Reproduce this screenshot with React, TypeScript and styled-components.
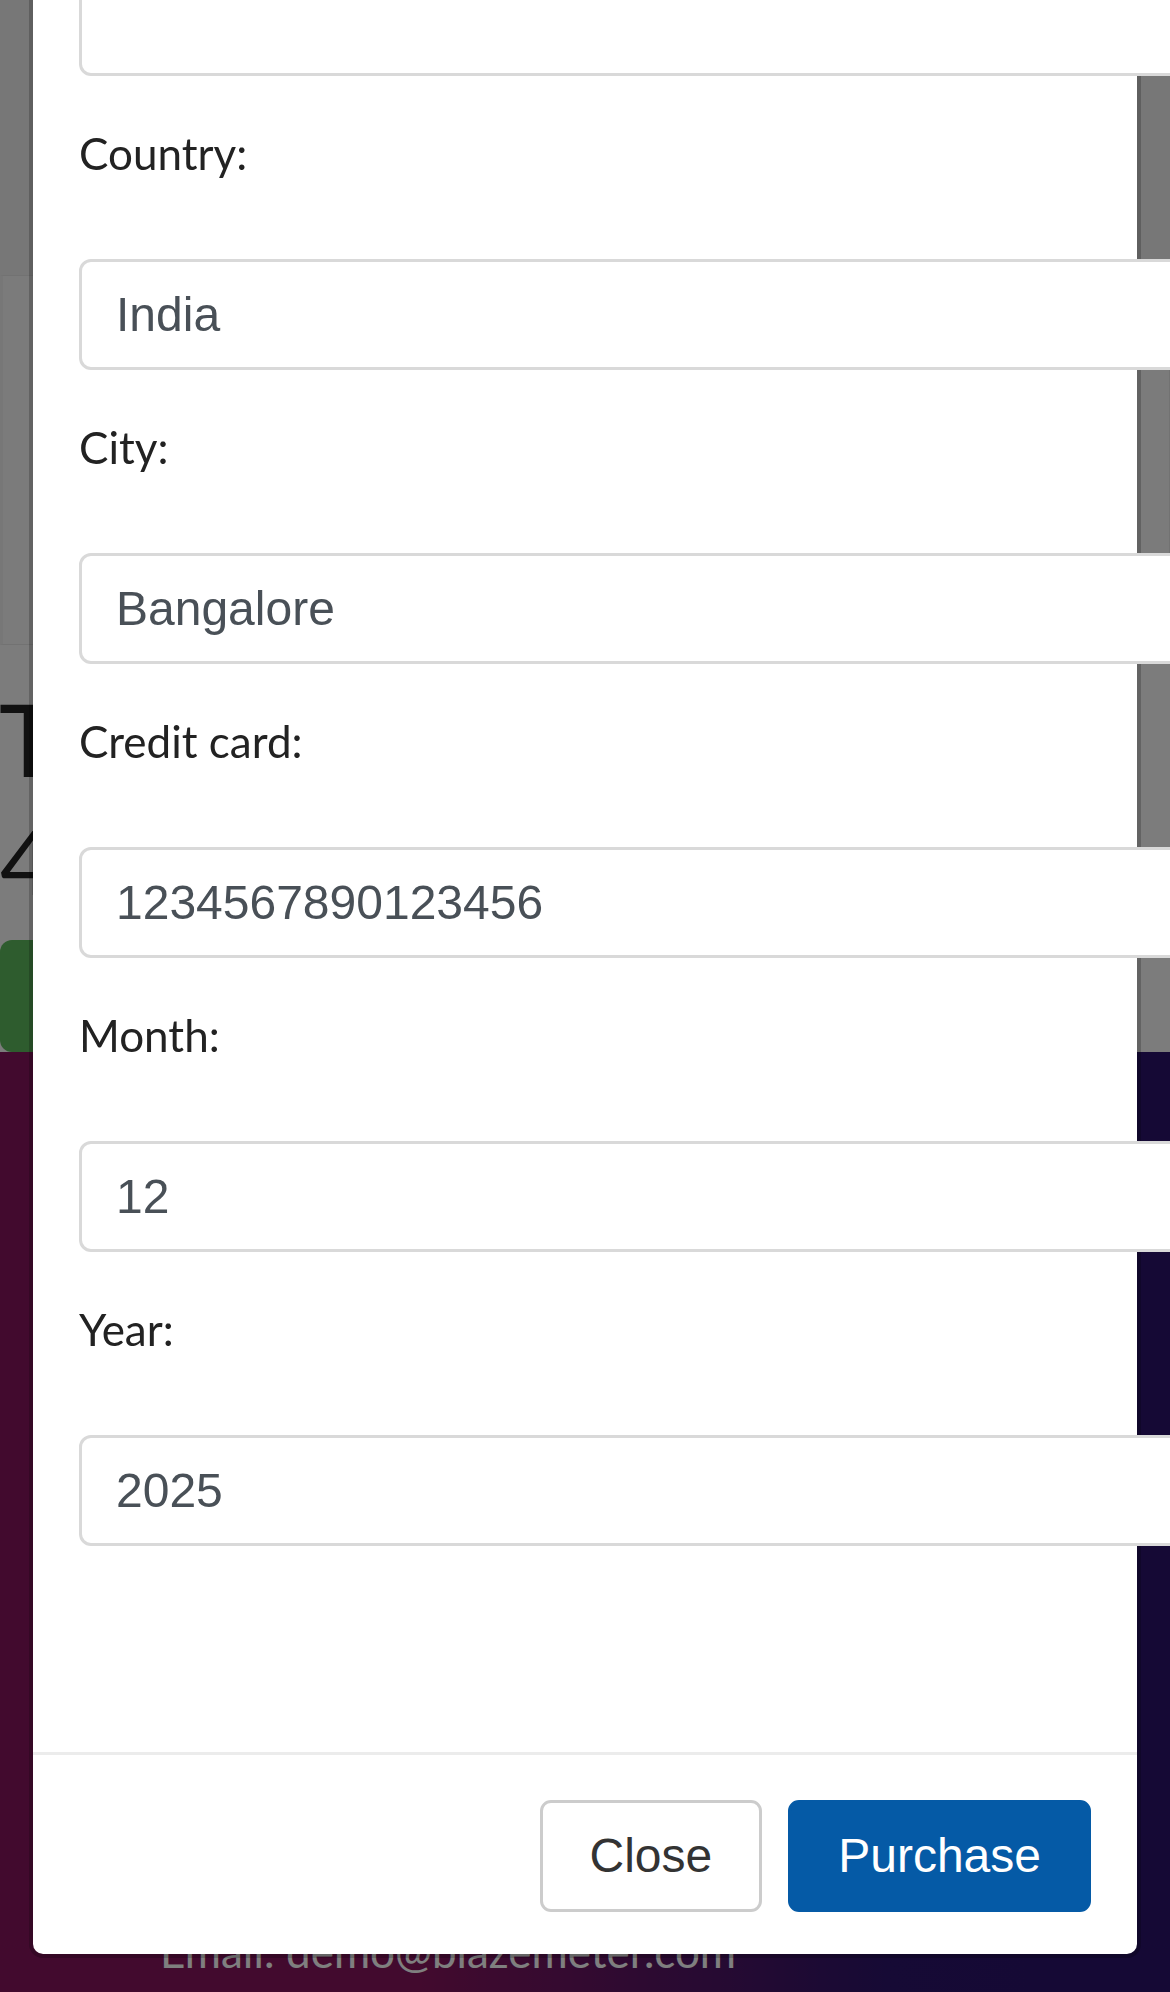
import React from "react";
import styled, { createGlobalStyle } from "styled-components";

const GlobalStyle = createGlobalStyle`
  html, body {
    margin: 0;
    padding: 0;
  }
  body {
    overflow: hidden;
    font-family: Lato, "Open Sans", sans-serif;
  }
  *, *::before, *::after {
    box-sizing: border-box;
  }
`;

/* ---------- underlying cart page ---------- */

const Page = styled.div`
  min-height: 100vh;
  display: flex;
  flex-direction: column;
  background: #f8f8f8;
`;

const TopBand = styled.div`
  height: 275px;
  background: #eeeeee;
`;

const Main = styled.main`
  display: flex;
  flex-direction: column;
  align-items: flex-start;
`;

const TableCard = styled.section`
  align-self: stretch;
  height: 370px;
  background: #f6f6f6;
  border: 1px solid #e4e4e4;
  border-left: 3px solid #eeeeee;
`;

const TotalHeading = styled.h2`
  margin: 43px 0 0 -1px;
  font: 400 100px/100px Lato, sans-serif;
  color: #222222;
`;

const TotalPrice = styled.h3`
  margin: 27px 0 0;
  font: 400 90px/90px Lato, sans-serif;
  color: #222222;
`;

const PlaceOrderButton = styled.button`
  margin-top: 35px;
  height: 112px;
  padding: 0 48px;
  border: none;
  border-radius: 12px;
  background: #5cb85c;
  color: #ffffff;
  font: 400 44px Lato, sans-serif;
`;

const Footer = styled.footer`
  flex: 1;
  display: flex;
  flex-direction: column;
  justify-content: flex-end;
  padding: 0 0 8px 160px;
  background: linear-gradient(
    90deg,
    #84145c 0%,
    #84145c 36%,
    #2c146a 76%,
    #2a126a 100%
  );
`;

const FooterTitle = styled.h4`
  margin: 0 0 30px;
  font: 700 55px/66px Lato, sans-serif;
  color: #ffffff;
`;

const FooterLine = styled.p`
  margin: 0;
  font: 400 44px/66px Lato, sans-serif;
  color: #ffffff;
`;

/* ---------- modal ---------- */

const Backdrop = styled.div`
  position: fixed;
  inset: 0;
  background: rgba(0, 0, 0, 0.5);
  overflow: hidden;
`;

const Dialog = styled.div`
  position: absolute;
  left: 29px;
  right: 29px;
  bottom: 34px;
  display: flex;
  flex-direction: column;
  background: #ffffff;
  background-clip: padding-box;
  border: 4px solid rgba(0, 0, 0, 0.2);
  border-radius: 14px;
`;

const ModalHeader = styled.div`
  display: flex;
  align-items: center;
  justify-content: space-between;
  padding: 46px;
  border-bottom: 3px solid #ebebeb;
`;

const ModalTitle = styled.h5`
  margin: 0;
  font: 400 55px/1.5 Lato, sans-serif;
  color: #212529;
`;

const HeaderClose = styled.span`
  font: 700 66px/1 "Liberation Sans", Arial, sans-serif;
  color: #000000;
  opacity: 0.5;
`;

const ModalBody = styled.div`
  display: flex;
  flex-direction: column;
  padding: 46px 46px 206px;
`;

const TotalLine = styled.p`
  margin: 0 0 46px;
  font: 400 44px/63px Lato, sans-serif;
  color: #212529;
`;

const FormGroup = styled.div`
  display: flex;
  flex-direction: column;
  margin-bottom: 46px;

  &:last-child {
    margin-bottom: 0;
  }
`;

const Label = styled.label`
  display: block;
  margin-bottom: 74px;
  font: 400 44px/63px Lato, sans-serif;
  color: #222222;
`;

const Input = styled.input`
  display: block;
  width: calc(100% + 100px);
  height: 111px;
  padding: 0 34px;
  border: 3px solid #d9d9d9;
  border-radius: 12px;
  background: #ffffff;
  font: 400 48px "Liberation Sans", Arial, sans-serif;
  color: #495057;
  outline: none;
`;

const ModalFooter = styled.div`
  display: flex;
  justify-content: flex-end;
  gap: 26px;
  padding: 45px 46px 42px;
  border-top: 3px solid #ececec;
`;

const Button = styled.button<{ $primary?: boolean }>`
  height: 112px;
  padding: 0 47px;
  border: 3px solid ${(p) => (p.$primary ? "#055aa6" : "#cccccc")};
  border-radius: 11px;
  background: ${(p) => (p.$primary ? "#055aa6" : "#ffffff")};
  color: ${(p) => (p.$primary ? "#ffffff" : "#333333")};
  font: 400 48px/1 "Liberation Sans", Arial, sans-serif;
  cursor: pointer;
`;

const fields: { id: string; label: string; value: string }[] = [
  { id: "name", label: "Name:", value: "" },
  { id: "country", label: "Country:", value: "India" },
  { id: "city", label: "City:", value: "Bangalore" },
  { id: "card", label: "Credit card:", value: "1234567890123456" },
  { id: "month", label: "Month:", value: "12" },
  { id: "year", label: "Year:", value: "2025" },
];

export default function App() {
  return (
    <>
      <GlobalStyle />
      <Page>
        <TopBand />
        <Main>
          <TableCard />
          <TotalHeading>Total</TotalHeading>
          <TotalPrice>400</TotalPrice>
          <PlaceOrderButton>Place Order</PlaceOrderButton>
        </Main>
        <Footer>
          <FooterTitle>Get in Touch</FooterTitle>
          <FooterLine>Address: 2390 El Camino Real</FooterLine>
          <FooterLine>Phone: +440 123456</FooterLine>
          <FooterLine>Email: demo@blazemeter.com</FooterLine>
        </Footer>
      </Page>

      <Backdrop>
        <Dialog role="dialog" aria-labelledby="orderModalLabel">
          <ModalHeader>
            <ModalTitle id="orderModalLabel">Place order</ModalTitle>
            <HeaderClose>×</HeaderClose>
          </ModalHeader>
          <ModalBody>
            <TotalLine>Total: 400</TotalLine>
            {fields.map((f) => (
              <FormGroup key={f.id}>
                <Label htmlFor={f.id}>{f.label}</Label>
                <Input id={f.id} type="text" defaultValue={f.value} readOnly />
              </FormGroup>
            ))}
          </ModalBody>
          <ModalFooter>
            <Button type="button">Close</Button>
            <Button type="button" $primary>
              Purchase
            </Button>
          </ModalFooter>
        </Dialog>
      </Backdrop>
    </>
  );
}
